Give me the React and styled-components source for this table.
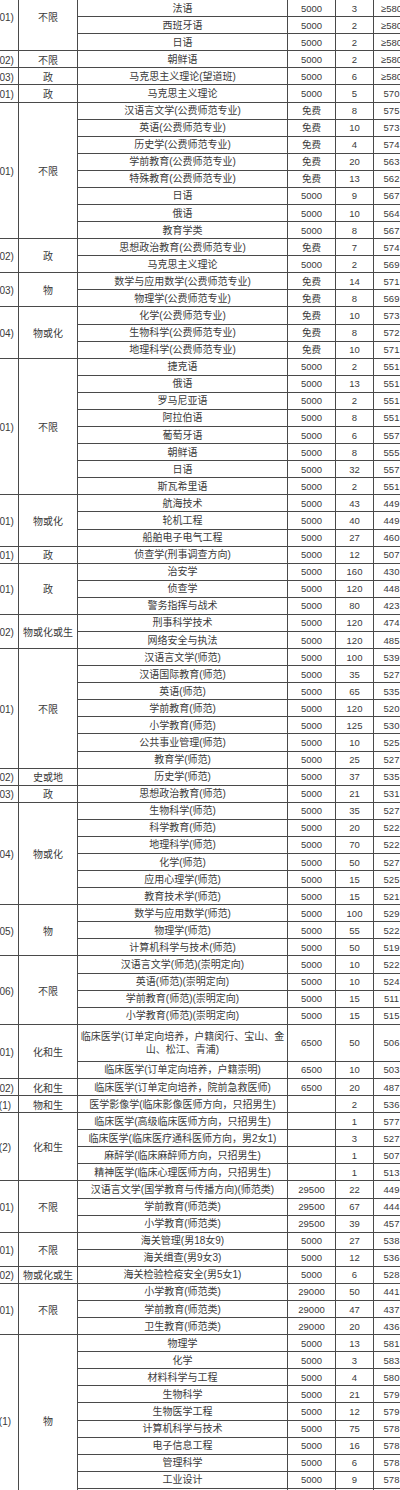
import React from 'react';
import styled, { createGlobalStyle } from 'styled-components';

const ROW = 17.08;

const GlobalStyle = createGlobalStyle`
  html, body {
    margin: 0;
    padding: 0;
    background: #fff;
  }
  body {
    font-family: "Liberation Sans", "Noto Sans CJK SC", sans-serif;
    color: #3a3a3a;
  }
`;

const Viewport = styled.div`
  width: 400px;
  height: 1490px;
  overflow: hidden;
  background: #fff;
`;

const Sheet = styled.div`
  width: 448px;
  margin: -17px 0 0 -38px;
`;

const Group = styled.div`
  display: flex;
`;

const SideCell = styled.div`
  box-sizing: border-box;
  width: ${p => p.$w}px;
  flex: none;
  display: flex;
  align-items: center;
  justify-content: center;
  border-right: 1px solid #4a4a4a;
  border-bottom: 1px solid #4a4a4a;
  font-size: 10px;
  white-space: nowrap;
`;

const Rows = styled.div`
  flex: 1;
  display: flex;
  flex-direction: column;
`;

const Row = styled.div`
  display: flex;
  height: ${p => (p.$tall ? ROW * 2 + 3 : ROW)}px;
`;

const Cell = styled.div`
  box-sizing: border-box;
  width: ${p => p.$w}px;
  flex: none;
  display: flex;
  align-items: center;
  justify-content: center;
  text-align: center;
  padding: 0 2px;
  border-right: 1px solid #4a4a4a;
  border-bottom: 1px solid #4a4a4a;
  font-size: ${p => (p.$num ? 9.5 : 10)}px;
  line-height: 13px;
  white-space: pre;
`;

const groups = [
  { code: '专业组(01)', subj: '不限', rows: [
    ['德语', '5000', '3', '≥580'],
    ['法语', '5000', '3', '≥580'],
    ['西班牙语', '5000', '2', '≥580'],
    ['日语', '5000', '2', '≥580'],
  ] },
  { code: '专业组(02)', subj: '不限', rows: [['朝鲜语', '5000', '2', '≥580']] },
  { code: '专业组(03)', subj: '政', rows: [['马克思主义理论(望道班)', '5000', '6', '≥580']] },
  { code: '专业组(01)', subj: '政', rows: [['马克思主义理论', '5000', '5', '570']] },
  { code: '专业组(01)', subj: '不限', rows: [
    ['汉语言文学(公费师范专业)', '免费', '8', '575'],
    ['英语(公费师范专业)', '免费', '10', '573'],
    ['历史学(公费师范专业)', '免费', '4', '574'],
    ['学前教育(公费师范专业)', '免费', '20', '563'],
    ['特殊教育(公费师范专业)', '免费', '13', '562'],
    ['日语', '5000', '9', '567'],
    ['俄语', '5000', '10', '564'],
    ['教育学类', '5000', '8', '567'],
  ] },
  { code: '专业组(02)', subj: '政', rows: [
    ['思想政治教育(公费师范专业)', '免费', '7', '574'],
    ['马克思主义理论', '5000', '2', '569'],
  ] },
  { code: '专业组(03)', subj: '物', rows: [
    ['数学与应用数学(公费师范专业)', '免费', '14', '571'],
    ['物理学(公费师范专业)', '免费', '8', '569'],
  ] },
  { code: '专业组(04)', subj: '物或化', rows: [
    ['化学(公费师范专业)', '免费', '10', '573'],
    ['生物科学(公费师范专业)', '免费', '8', '572'],
    ['地理科学(公费师范专业)', '免费', '10', '571'],
  ] },
  { code: '专业组(01)', subj: '不限', rows: [
    ['捷克语', '5000', '2', '551'],
    ['俄语', '5000', '13', '551'],
    ['罗马尼亚语', '5000', '2', '551'],
    ['阿拉伯语', '5000', '8', '551'],
    ['葡萄牙语', '5000', '6', '557'],
    ['朝鲜语', '5000', '8', '555'],
    ['日语', '5000', '32', '557'],
    ['斯瓦希里语', '5000', '2', '551'],
  ] },
  { code: '专业组(01)', subj: '物或化', rows: [
    ['航海技术', '5000', '43', '449'],
    ['轮机工程', '5000', '40', '449'],
    ['船舶电子电气工程', '5000', '27', '460'],
  ] },
  { code: '专业组(01)', subj: '政', rows: [['侦查学(刑事调查方向)', '5000', '12', '507']] },
  { code: '专业组(01)', subj: '政', rows: [
    ['治安学', '5000', '160', '430'],
    ['侦查学', '5000', '120', '448'],
    ['警务指挥与战术', '5000', '80', '423'],
  ] },
  { code: '专业组(02)', subj: '物或化或生', rows: [
    ['刑事科学技术', '5000', '120', '474'],
    ['网络安全与执法', '5000', '120', '485'],
  ] },
  { code: '专业组(01)', subj: '不限', rows: [
    ['汉语言文学(师范)', '5000', '100', '539'],
    ['汉语国际教育(师范)', '5000', '35', '527'],
    ['英语(师范)', '5000', '65', '535'],
    ['学前教育(师范)', '5000', '120', '520'],
    ['小学教育(师范)', '5000', '125', '530'],
    ['公共事业管理(师范)', '5000', '10', '525'],
    ['教育学(师范)', '5000', '25', '527'],
  ] },
  { code: '专业组(02)', subj: '史或地', rows: [['历史学(师范)', '5000', '37', '535']] },
  { code: '专业组(03)', subj: '政', rows: [['思想政治教育(师范)', '5000', '21', '531']] },
  { code: '专业组(04)', subj: '物或化', rows: [
    ['生物科学(师范)', '5000', '35', '527'],
    ['科学教育(师范)', '5000', '20', '522'],
    ['地理科学(师范)', '5000', '70', '522'],
    ['化学(师范)', '5000', '50', '527'],
    ['应用心理学(师范)', '5000', '15', '525'],
    ['教育技术学(师范)', '5000', '15', '521'],
  ] },
  { code: '专业组(05)', subj: '物', rows: [
    ['数学与应用数学(师范)', '5000', '100', '529'],
    ['物理学(师范)', '5000', '55', '522'],
    ['计算机科学与技术(师范)', '5000', '50', '519'],
  ] },
  { code: '专业组(06)', subj: '不限', rows: [
    ['汉语言文学(师范)(崇明定向)', '5000', '10', '522'],
    ['英语(师范)(崇明定向)', '5000', '10', '524'],
    ['学前教育(师范)(崇明定向)', '5000', '15', '511'],
    ['小学教育(师范)(崇明定向)', '5000', '15', '515'],
  ] },
  { code: '专业组(01)', subj: '化和生', rows: [
    ['临床医学(订单定向培养，户籍闵行、宝山、金\n山、松江、青浦)', '6500', '50', '506', true],
    ['临床医学(订单定向培养，户籍崇明)', '6500', '10', '503'],
  ] },
  { code: '专业组(02)', subj: '化和生', rows: [['临床医学(订单定向培养，院前急救医师)', '6500', '20', '487']] },
  { code: '专业组(1)', subj: '物和生', rows: [['医学影像学(临床影像医师方向，只招男生)', '', '2', '536']] },
  { code: '专业组(2)', subj: '化和生', rows: [
    ['临床医学(高级临床医师方向，只招男生)', '', '1', '577'],
    ['临床医学(临床医疗通科医师方向，男2女1)', '', '3', '527'],
    ['麻醉学(临床麻醉师方向，只招男生)', '', '1', '507'],
    ['精神医学(临床心理医师方向，只招男生)', '', '1', '513'],
  ] },
  { code: '专业组(01)', subj: '不限', rows: [
    ['汉语言文学(国学教育与传播方向)(师范类)', '29500', '22', '449'],
    ['学前教育(师范类)', '29500', '67', '444'],
    ['小学教育(师范类)', '29500', '39', '457'],
  ] },
  { code: '专业组(01)', subj: '不限', rows: [
    ['海关管理(男18女9)', '5000', '27', '538'],
    ['海关缉查(男9女3)', '5000', '12', '536'],
  ] },
  { code: '专业组(02)', subj: '物或化或生', rows: [['海关检验检疫安全(男5女1)', '5000', '6', '528']] },
  { code: '专业组(01)', subj: '不限', rows: [
    ['小学教育(师范类)', '29000', '50', '441'],
    ['学前教育(师范类)', '29000', '47', '437'],
    ['卫生教育(师范类)', '29000', '20', '436'],
  ] },
  { code: '专业组(1)', subj: '物', rows: [
    ['物理学', '5000', '13', '581'],
    ['化学', '5000', '3', '583'],
    ['材料科学与工程', '5000', '4', '580'],
    ['生物科学', '5000', '21', '579'],
    ['生物医学工程', '5000', '12', '579'],
    ['计算机科学与技术', '5000', '75', '578'],
    ['电子信息工程', '5000', '16', '578'],
    ['管理科学', '5000', '6', '578'],
    ['工业设计', '5000', '9', '578'],
    ['数据科学与大数据技术', '5000', '10', '577'],
  ] },
];

function App() {
  return (
    <>
      <GlobalStyle />
      <Viewport>
        <Sheet>
          {groups.map((g, i) => (
            <Group key={i}>
              <SideCell $w={57}>{g.code}</SideCell>
              <SideCell $w={59}>{g.subj}</SideCell>
              <Rows>
                {g.rows.map(([name, fee, num, score, tall], j) => (
                  <Row key={j} $tall={tall}>
                    <Cell $w={210}>{name}</Cell>
                    <Cell $w={48} $num>{fee}</Cell>
                    <Cell $w={38} $num>{num}</Cell>
                    <Cell $w={36} $num>{score}</Cell>
                  </Row>
                ))}
              </Rows>
            </Group>
          ))}
        </Sheet>
      </Viewport>
    </>
  );
}

export default App;
